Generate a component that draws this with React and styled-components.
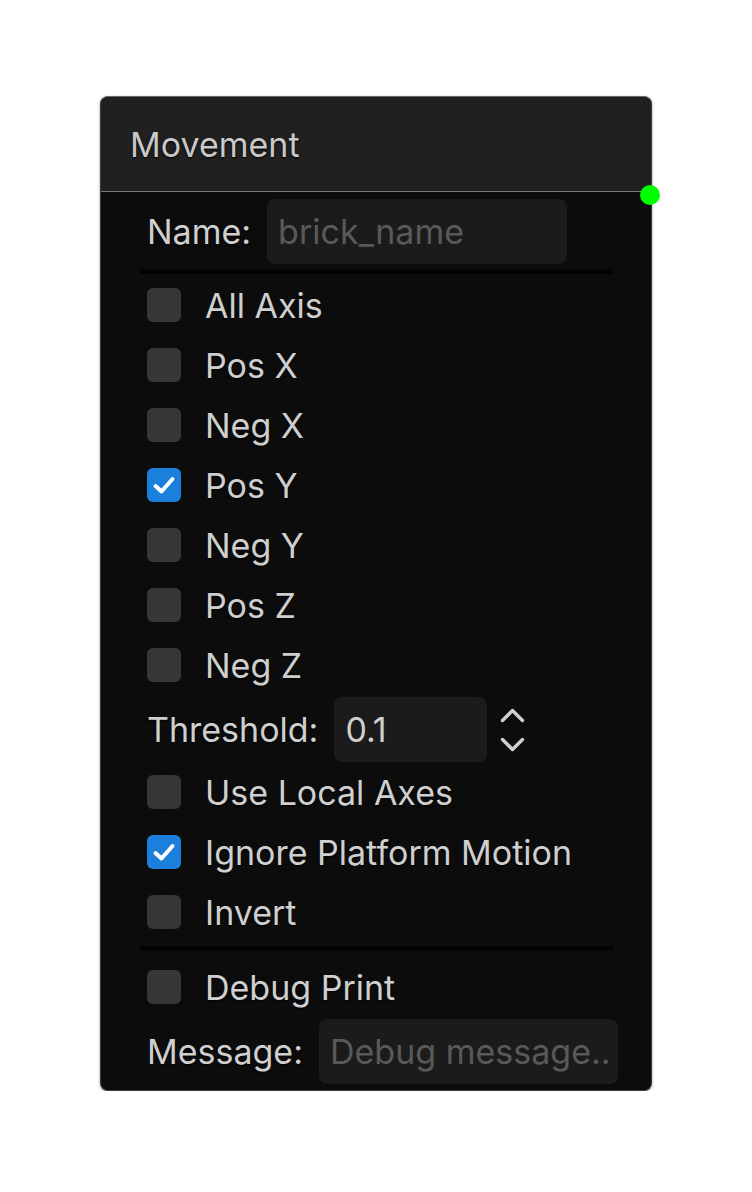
import React from "react";
import styled, { createGlobalStyle } from "styled-components";

const Global = createGlobalStyle`
  body {
    margin: 0;
    background: #ffffff;
    font-family: Inter, "Noto Sans", sans-serif;
  }
`;

const Page = styled.div`
  padding: 96px 0 0 100px;
`;

const Node = styled.div`
  position: relative;
  width: 552px;
  box-sizing: border-box;
  background: #0c0c0c;
  border: 1.5px solid #3c3c3c;
  border-top-color: #6a6a6a;
  border-radius: 8px;
  box-shadow: 0 1px 3px rgba(0, 0, 0, 0.4);
`;

const Header = styled.div`
  height: 95px;
  box-sizing: border-box;
  display: flex;
  align-items: center;
  padding-left: 29px;
  background: #202020;
  border-bottom: 1.5px solid #7a7a7a;
  border-radius: 7px 7px 0 0;
  color: #c9c9c9;
  font-size: 34px;
  text-shadow: 0 1px 2px #000;
`;

const Port = styled.span`
  position: absolute;
  right: -9px;
  top: 88px;
  width: 20px;
  height: 20px;
  border-radius: 50%;
  background: #00ff00;
`;

const Body = styled.div`
  display: flex;
  flex-direction: column;
  padding: 7px 33px 6px 46px;
`;

const FieldRow = styled.div`
  display: flex;
  align-items: center;
  gap: 16px;
  height: 65px;
  margin-top: ${(p) => p.$mt || 0}px;
`;

const Label = styled.span`
  color: #cfcfcf;
  font-size: 34px;
  white-space: nowrap;
  text-shadow: 0 1px 2px #000;
`;

const Input = styled.div`
  width: ${(p) => p.$w}px;
  height: 65px;
  box-sizing: border-box;
  display: flex;
  align-items: center;
  padding-left: 11px;
  border-radius: 8px;
  background: #1b1b1b;
  color: ${(p) => (p.$placeholder ? "#595959" : "#cfcfcf")};
  font-size: 34px;
  white-space: nowrap;
  overflow: hidden;
`;

const Divider = styled.div`
  height: 5px;
  background: #030303;
  margin: ${(p) => p.$before}px 5px ${(p) => p.$after}px -7px;
`;

const CheckRow = styled.div`
  display: flex;
  align-items: center;
  gap: 24px;
  height: 60px;
`;

const Box = styled.span`
  width: 34px;
  height: 34px;
  border-radius: 6px;
  background: ${(p) => (p.$on ? "#1a80dc" : "#373737")};
  display: flex;
  align-items: center;
  justify-content: center;
  flex: none;
`;

const Spinner = styled.div`
  display: flex;
  flex-direction: column;
  gap: 14px;
  margin-left: -3px;
`;

const Check = ({ label, on }) => (
  <CheckRow>
    <Box $on={on}>
      {on && (
        <svg width="26" height="26" viewBox="0 0 26 26">
          <path
            d="M4.5 14 L10.5 19.5 L21.5 7"
            fill="none"
            stroke="#fff"
            strokeWidth="4"
            strokeLinecap="round"
            strokeLinejoin="round"
          />
        </svg>
      )}
    </Box>
    <Label>{label}</Label>
  </CheckRow>
);

const Chevron = ({ up }) => (
  <svg width="25" height="15" viewBox="0 0 25 15">
    <path
      d={up ? "M2.5 12.5 L12.5 2.5 L22.5 12.5" : "M2.5 2.5 L12.5 12.5 L22.5 2.5"}
      fill="none"
      stroke="#cfcfcf"
      strokeWidth="3.4"
      strokeLinecap="round"
      strokeLinejoin="round"
    />
  </svg>
);

const axes = ["All Axis", "Pos X", "Neg X", "Pos Y", "Neg Y", "Pos Z", "Neg Z"];

export default function App() {
  return (
    <Page>
      <Global />
      <Node>
        <Header>Movement</Header>
        <Port />
        <Body>
          <FieldRow>
            <Label>Name:</Label>
            <Input $w={300} $placeholder>
              brick_name
            </Input>
          </FieldRow>
          <Divider $before={5} $after={1} />
          {axes.map((a) => (
            <Check key={a} label={a} on={a === "Pos Y"} />
          ))}
          <FieldRow $mt={2}>
            <Label>Threshold:</Label>
            <Input $w={153}>0.1</Input>
            <Spinner>
              <Chevron up />
              <Chevron />
            </Spinner>
          </FieldRow>
          <Check label="Use Local Axes" />
          <Check label="Ignore Platform Motion" on />
          <Check label="Invert" />
          <Divider $before={4} $after={6} />
          <Check label="Debug Print" />
          <FieldRow $mt={2}>
            <Label>Message:</Label>
            <Input $w={299} $placeholder>
              Debug message..
            </Input>
          </FieldRow>
        </Body>
      </Node>
    </Page>
  );
}
